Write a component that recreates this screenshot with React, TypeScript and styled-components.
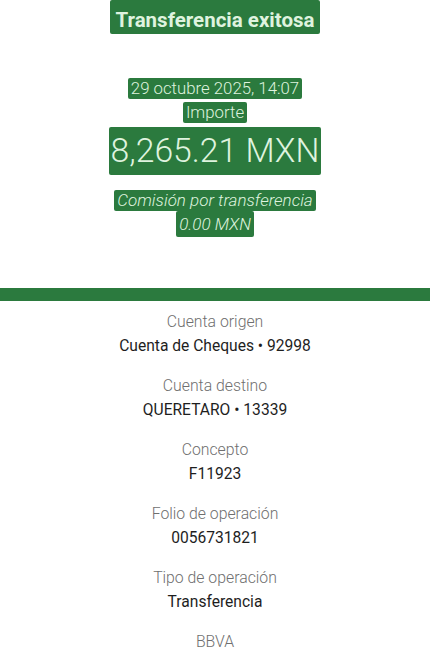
import React from "react";
import styled, { createGlobalStyle } from "styled-components";

const GREEN = "#2b7a3e";

const Global = createGlobalStyle`
  html, body { margin: 0; padding: 0; background: #ffffff; }
  body { font-family: Roboto, "Liberation Sans", sans-serif; -webkit-font-smoothing: antialiased; }
`;

const Page = styled.div`
  width: 430px;
  min-height: 661px;
  background: #fff;
  display: flex;
  flex-direction: column;
`;

const Header = styled.header`
  display: flex;
  flex-direction: column;
  align-items: center;
`;

const Hl = styled.span<{ $size: number; $weight?: number; $italic?: boolean; $pad?: string; $lh?: number }>`
  display: inline-block;
  background: ${GREEN};
  color: #dff3df;
  font-size: ${(p) => p.$size}px;
  font-weight: ${(p) => p.$weight ?? 300};
  font-style: ${(p) => (p.$italic ? "italic" : "normal")};
  line-height: ${(p) => p.$lh ?? p.$size + 6}px;
  padding: ${(p) => p.$pad ?? "0 3px"};
  border-radius: 2px;
  white-space: nowrap;
`;

const Gap = styled.div<{ $h: number }>`
  height: ${(p) => p.$h}px;
`;

const Bar = styled.div`
  height: 13px;
  background: ${GREEN};
  margin-top: 51px;
`;

const Details = styled.section`
  display: flex;
  flex-direction: column;
  align-items: center;
  padding-top: 11px;
  gap: 20px;
`;

const Item = styled.div`
  display: flex;
  flex-direction: column;
  align-items: center;
  gap: 4px;
`;

const Label = styled.div`
  font-size: 15.8px;
  font-weight: 300;
  color: #6f6f6f;
  line-height: 20px;
`;

const Value = styled.div`
  font-size: 15.6px;
  font-weight: 400;
  color: #1e1e1e;
  line-height: 20px;
`;

const rows = [
  ["Cuenta origen", "Cuenta de Cheques • 92998"],
  ["Cuenta destino", "QUERETARO • 13339"],
  ["Concepto", "F11923"],
  ["Folio de operación", "0056731821"],
  ["Tipo de operación", "Transferencia"],
];

export default function App() {
  return (
    <Page>
      <Global />
      <Header>
        <Hl $size={20.5} $weight={700} $lh={28} $pad="6px 5px 0">Transferencia exitosa</Hl>
        <Gap $h={44} />
        <Hl $size={16.8} $lh={21}>29 octubre 2025, 14:07</Hl>
        <Gap $h={3} />
        <Hl $size={16.8} $lh={21}>Importe</Hl>
        <Gap $h={4} />
        <Hl $size={33.7} $lh={48} $weight={300} $pad="0 2px">8,265.21 MXN</Hl>
        <Gap $h={15} />
        <Hl $size={17} $italic $lh={21}>Comisión por transferencia</Hl>
        <Hl $size={17} $italic $lh={26}>0.00 MXN</Hl>
      </Header>
      <Bar />
      <Details>
        {rows.map(([l, v]) => (
          <Item key={l}>
            <Label>{l}</Label>
            <Value>{v}</Value>
          </Item>
        ))}
        <Item>
          <Label>BBVA</Label>
        </Item>
      </Details>
    </Page>
  );
}
